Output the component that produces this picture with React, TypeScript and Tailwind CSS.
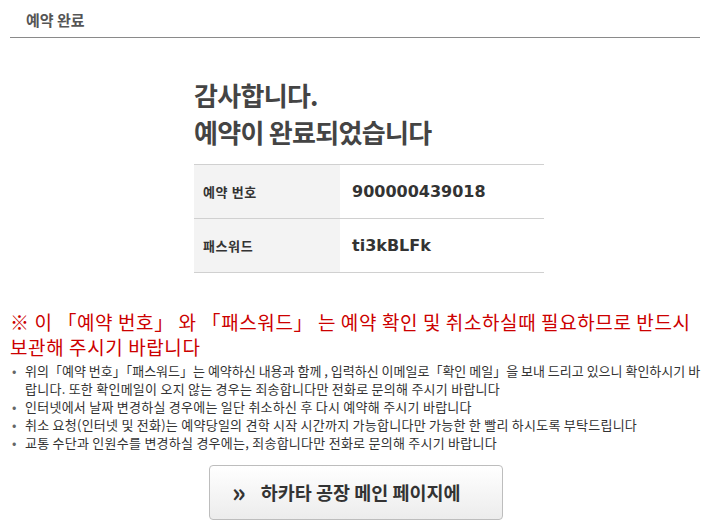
import React from "react";

const KR = "font-['Noto_Sans_CJK_KR','Noto_Sans',sans-serif]";

export default function App() {
  const bullets: React.ReactNode[] = [
    <>
      <span className="whitespace-nowrap tracking-[0px]">위의「예약 번호」「패스워드」는 예약하신 내용과 함께 , 입력하신 이메일로「확인 메일」을 보내 드리고 있으니 확인하시기 바</span>
      <br />
      랍니다. 또한 확인메일이 오지 않는 경우는 죄송합니다만 전화로 문의해 주시기 바랍니다
    </>,
    <>인터넷에서 날짜 변경하실 경우에는 일단 취소하신 후 다시 예약해 주시기 바랍니다</>,
    <>취소 요청(인터넷 및 전화)는 예약당일의 견학 시작 시간까지 가능합니다만 가능한 한 빨리 하시도록 부탁드립니다</>,
    <>교통 수단과 인원수를 변경하실 경우에는, 죄송합니다만 전화로 문의해 주시기 바랍니다</>,
  ];

  return (
    <div className={`w-[712px] h-[523px] bg-white overflow-hidden ${KR}`}>
      <div className="ml-[10px] mr-[12px] border-b border-[#8a8a8a] pt-[10px] pb-[8px] pl-[16px]">
        <h1 className="text-[15px] leading-[19px] font-bold text-[#555]">예약 완료</h1>
      </div>

      <div className="ml-[194px] w-[350px] mt-[38px]">
        <div className="text-[26px] leading-[37px] font-bold text-[#444] tracking-[-0.7px]">
          <p>감사합니다.</p>
          <p>예약이 완료되었습니다</p>
        </div>

        <div className="mt-[14px] border-t border-[#d0d0d0]">
          <div className="flex h-[54px] border-b border-[#d0d0d0]">
            <div className="w-[146px] bg-[#f3f3f3] flex items-center pl-[9px] text-[13px] font-bold text-[#333] tracking-[0.6px]">예약 번호</div>
            <div className="flex items-center pl-[12px] font-['DejaVu_Sans',sans-serif] text-[16px] font-bold text-[#333]">900000439018</div>
          </div>
          <div className="flex h-[54px] border-b border-[#d0d0d0]">
            <div className="w-[146px] bg-[#f3f3f3] flex items-center pl-[9px] text-[13px] font-bold text-[#333] tracking-[0.6px]">패스워드</div>
            <div className="flex items-center pl-[12px] font-['DejaVu_Sans',sans-serif] text-[16px] font-bold text-[#333]">ti3kBLFk</div>
          </div>
        </div>
      </div>

      <div className="px-[10px] mt-[36px]">
        <p className="text-[19px] leading-[25px] text-[#cc0000] tracking-[0.6px] whitespace-nowrap">
          ※ 이 「예약 번호」 와 「패스워드」 는 예약 확인 및 취소하실때 필요하므로 반드시
          <br />
          보관해 주시기 바랍니다
        </p>
        <ul className="mt-[3px] text-[13px] leading-[18px] text-[#333] tracking-[0.25px]">
          {bullets.map((b, i) => (
            <li key={i} className="flex">
              <span className="w-[15px] shrink-0 pl-[2px] text-[#666]">•</span>
              <span>{b}</span>
            </li>
          ))}
        </ul>
      </div>

      <div className="flex justify-center mt-[13px]">
        <button className="w-[294px] h-[55px] rounded-[4px] border border-[#bdbdbd] bg-gradient-to-b from-white to-[#ececec] flex items-center pl-[22px] text-[#333] font-bold">
          <span className="text-[26px] leading-none mr-[15px] mt-[-4px]">»</span>
          <span className="text-[18.5px]">하카타 공장 메인 페이지에</span>
        </button>
      </div>
    </div>
  );
}
